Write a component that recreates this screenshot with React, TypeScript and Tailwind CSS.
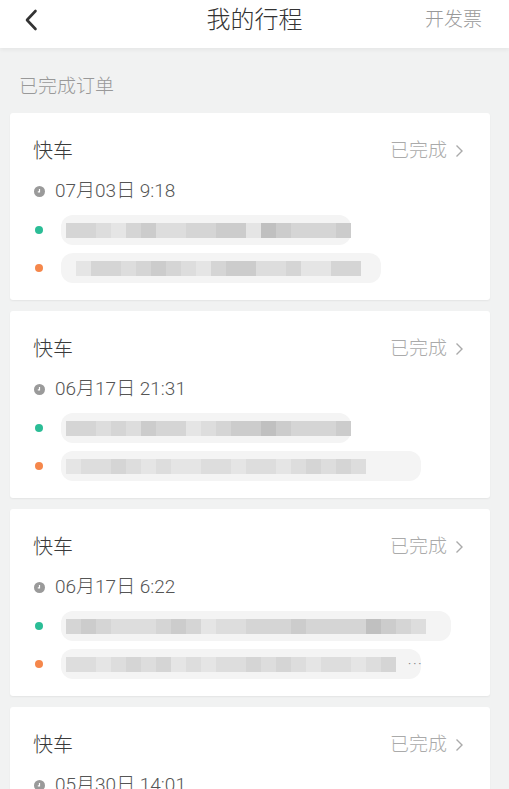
import React from "react";

const cjk = "font-['Roboto','Noto_Sans_CJK_SC',sans-serif]";

const shades: Record<string, string> = {
  "1": "#e5e5e5",
  "2": "#dddddd",
  "3": "#d5d5d5",
  "4": "#cccccc",
  "5": "#c0c0c0",
};

interface Trip {
  date: string;
  from: { offset: number; haze: number; cells: string };
  to: { offset: number; haze: number; cells: string; dots?: boolean };
}

const trips: Trip[] = [
  {
    date: "07月03日 9:18",
    from: { offset: 5, haze: 290, cells: "3321342233441543334" },
    to: { offset: 15, haze: 320, cells: "1332343213442231133" },
  },
  {
    date: "06月17日 21:31",
    from: { offset: 5, haze: 290, cells: "3323243312344543334" },
    to: { offset: 5, haze: 360, cells: "12232121122122123232" },
  },
  {
    date: "06月17日 6:22",
    from: { offset: 5, haze: 390, cells: "343222343122333433335432" },
    to: { offset: 5, haze: 360, cells: "2212323121223232122123", dots: true },
  },
  {
    date: "05月30日 14:01",
    from: { offset: 5, haze: 290, cells: "3321342233441543334" },
    to: { offset: 5, haze: 320, cells: "3221342213442231122" },
  },
];

const Mosaic = ({
  offset,
  haze,
  cells,
  dots,
}: {
  offset: number;
  haze: number;
  cells: string;
  dots?: boolean;
}) => {
  return (
    <div className="relative h-[30px] flex items-center">
      <div
        className="absolute left-0 top-0 h-[30px] rounded-[12px] bg-[#f4f4f4]"
        style={{ width: haze }}
      />
      <div className="relative flex h-[15px]" style={{ marginLeft: offset }}>
        {cells.split("").map((c, i) => (
          <div
            key={i}
            className="w-[15px] h-full"
            style={{ backgroundColor: shades[c] }}
          />
        ))}
      </div>
      {dots && (
        <span className="relative ml-[12px] text-[#888] text-[12px] tracking-[2px]">
          ···
        </span>
      )}
    </div>
  );
};

const TripCard = ({ trip }: { trip: Trip }) => {
  return (
    <div className="bg-white rounded-[3px] shadow-[0_1px_2px_rgba(0,0,0,0.06)] pt-[26px] pb-[20px] pl-[23px] pr-[26px]">
      <div className="flex items-center justify-between h-[24px]">
        <span className="text-[20px] text-[#3a3a3a] font-light">快车</span>
        <div className="flex items-center gap-[8px] text-[#aaa]">
          <span className="text-[19px] font-light">已完成</span>
          <svg width="9" height="14" viewBox="0 0 9 14" fill="none">
            <path d="M1.5 1.5 L7 7 L1.5 12.5" stroke="#aaa" strokeWidth="1.4" />
          </svg>
        </div>
      </div>
      <div className="mt-[16px] h-[24px] flex items-center">
        <svg width="11" height="11" viewBox="0 0 11 11" className="ml-[1px]">
          <circle cx="5.5" cy="5.5" r="5.5" fill="#9a9a9a" />
          <path d="M5.5 3 V5.8 H3.8" stroke="#fff" strokeWidth="1.2" fill="none" />
        </svg>
        <span className="ml-[10px] text-[19px] text-[#555] font-light">
          {trip.date}
        </span>
      </div>
      <div className="mt-[15px] h-[24px] flex items-center">
        <div className="w-[8px] h-[8px] rounded-full bg-[#2bbd96] ml-[2px] shrink-0" />
        <div className="ml-[18px]">
          <Mosaic {...trip.from} />
        </div>
      </div>
      <div className="mt-[14px] h-[24px] flex items-center">
        <div className="w-[8px] h-[8px] rounded-full bg-[#f5874b] ml-[2px] shrink-0" />
        <div className="ml-[18px]">
          <Mosaic {...trip.to} />
        </div>
      </div>
    </div>
  );
};

export default function App() {
  return (
    <div className={`w-[509px] h-[789px] overflow-hidden bg-[#f1f2f2] ${cjk}`}>
      <header className="relative h-[48px] bg-white shadow-[0_2px_4px_rgba(0,0,0,0.05)] z-10">
        <div className="h-[40px] flex items-center justify-between">
          <div className="w-[100px] pl-[24px] flex items-center">
            <svg width="14" height="22" viewBox="0 0 14 22" fill="none">
              <path
                d="M11.5 2 L3 11 L11.5 20"
                stroke="#333"
                strokeWidth="2.6"
                strokeLinecap="round"
                strokeLinejoin="round"
              />
            </svg>
          </div>
          <h1 className="text-[24px] text-[#333] font-light leading-none">我的行程</h1>
          <div className="w-[100px] pr-[27px] text-right text-[19px] text-[#999] font-light">
            开发票
          </div>
        </div>
      </header>
      <div className="pt-[28px] pl-[19px] h-[50px] text-[19px] text-[#999] font-light leading-[22px]">
        已完成订单
      </div>
      <div className="mt-[15px] ml-[10px] mr-[19px] flex flex-col gap-[11px]">
        {trips.map((t, i) => (
          <TripCard key={i} trip={t} />
        ))}
      </div>
    </div>
  );
}
